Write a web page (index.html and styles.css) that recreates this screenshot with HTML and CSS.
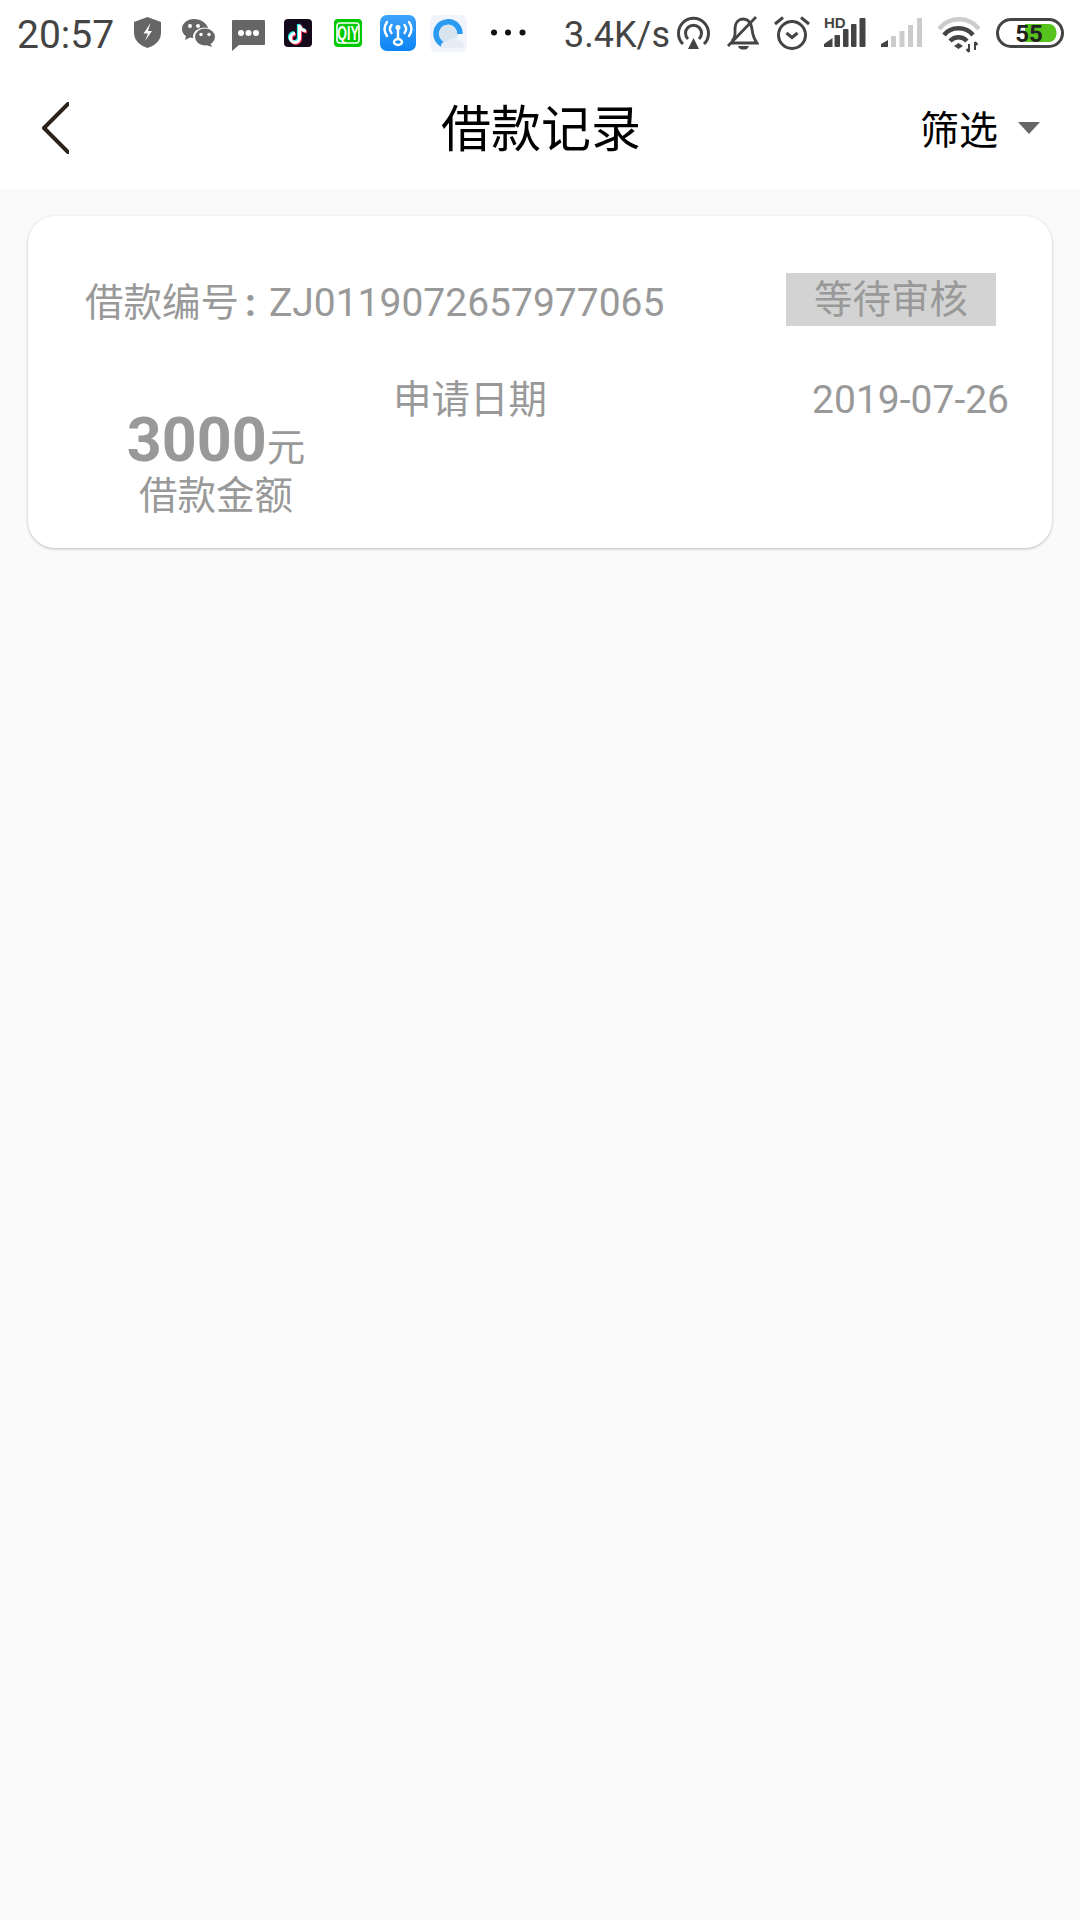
FILE: index.html
```html
<!DOCTYPE html>
<html lang="zh-CN">
<head>
    <meta charset="UTF-8">
    <meta name="viewport" content="width=device-width, initial-scale=1.0">
    <title>借款记录</title>
    <link rel="stylesheet" href="styles.css">
</head>
<body>
    <!-- Status bar: every icon is 70 tall so its y values are screen y values -->
    <div class="status-bar">
        <div class="status-group">
            <span class="clock">20:57</span>
            <svg class="ic-shield" width="27" height="70" viewBox="0 0 27 70">
                <path d="M13.500 17 L27 22 V33 C27 41 20 46 13.500 48 C7 46 0 41 0 33 V22 Z" fill="#666"/>
                <path d="M16.500 23 L9.500 33.500 H14 L11 41 L18 31 H14 Z" fill="#fff"/>
            </svg>
            <svg class="ic-wechat" width="33" height="70" viewBox="0 0 33 70">
                <path d="M12 19 C5 19 0 23.500 0 29 C0 32 1.500 34.500 4 36 L3 40 L8 37.500 C10 38 12 38.200 14 38 L26 28 C24.500 23 19 19 12 19 Z" fill="#666"/>
                <ellipse cx="22.500" cy="37" rx="11.500" ry="9.500" fill="#fff"/>
                <ellipse cx="23" cy="37" rx="10" ry="8.500" fill="#666"/>
                <path d="M28 43 L30 47 L24 45 Z" fill="#666"/>
                <circle cx="8" cy="26" r="2" fill="#fff"/>
                <circle cx="16" cy="26" r="2" fill="#fff"/>
                <circle cx="19" cy="34.500" r="1.700" fill="#fff"/>
                <circle cx="27" cy="34.500" r="1.700" fill="#fff"/>
            </svg>
            <svg class="ic-msg" width="33" height="70" viewBox="0 0 33 70">
                <path d="M1 20 H32 Q33 20 33 21 V44 Q33 45 32 45 H7 L0 51 V21 Q0 20 1 20 Z" fill="#666"/>
                <circle cx="9" cy="33" r="3" fill="#fff"/>
                <circle cx="16.500" cy="33" r="3" fill="#fff"/>
                <circle cx="24" cy="33" r="3" fill="#fff"/>
            </svg>
            <svg class="ic-tiktok" width="28" height="70" viewBox="0 0 28 70">
                <rect y="19" width="28" height="28" rx="4" fill="#15091c"/>
                <g fill="none" stroke-width="3.200">
                    <path d="M14.500 24 V37 A4.500 4.500 0 1 1 10 32.500 M14.500 24 C15 27 17.500 29.500 21 30" stroke="#25f4ee"/>
                    <path d="M16.500 26 V39 A4.500 4.500 0 1 1 12 34.500 M16.500 26 C17 29 19.500 31.500 23 32" stroke="#fe2c55"/>
                    <path d="M15.500 25 V38 A4.500 4.500 0 1 1 11 33.500 M15.500 25 C16 28 18.500 30.500 22 31" stroke="#fff"/>
                </g>
            </svg>
            <svg class="ic-iqiyi" width="28" height="70" viewBox="0 0 28 70">
                <rect y="19" width="28" height="28" rx="4" fill="#00c902"/>
                <rect x="3" y="23" width="22" height="20" rx="3" fill="none" stroke="#fff" stroke-width="1.600"/>
                <text class="iqiyi-text" transform="translate(14 40) scale(0.62 1)" text-anchor="middle">QIY</text>
            </svg>
            <svg class="ic-wifikey" width="36" height="70" viewBox="0 0 36 70">
                <defs>
                    <linearGradient id="keyBlue" x1="0" y1="0" x2="0" y2="1">
                        <stop offset="0" stop-color="#3ea3fb"/>
                        <stop offset="1" stop-color="#0b84f3"/>
                    </linearGradient>
                </defs>
                <rect y="15" width="36" height="36" rx="7" fill="url(#keyBlue)"/>
                <g fill="none" stroke="#fff" stroke-width="2.400" stroke-linecap="round">
                    <path d="M7 22 C3.500 27 3.500 31 7 36"/>
                    <path d="M29 22 C32.500 27 32.500 31 29 36"/>
                    <path d="M11.500 25 C9.500 27.500 9.500 30.500 11.500 33"/>
                    <path d="M24.500 25 C26.500 27.500 26.500 30.500 24.500 33"/>
                    <path d="M18 29 V39"/>
                    <ellipse cx="18" cy="42" rx="4" ry="3"/>
                </g>
                <circle cx="18" cy="27.500" r="2.500" fill="#fff"/>
            </svg>
            <svg class="ic-qq" width="37" height="70" viewBox="0 0 37 70">
                <rect y="15" width="37" height="37" rx="6" fill="#f1f5fb"/>
                <circle cx="18" cy="33" r="10" fill="#d9e4f1"/>
                <path d="M14 45 A12 12 0 1 1 30 34" fill="none" stroke="#2b9bf2" stroke-width="5.500"/>
                <path d="M11 46 C11 42 15 41 17 42 C19 37 28 37 29 41 C34 41 36 48 31 48 H13 C12 48 11 47 11 46 Z" fill="#e6edf6"/>
            </svg>
            <svg class="ic-dots" width="35" height="70" viewBox="0 0 35 70">
                <circle cx="3" cy="32.500" r="3" fill="#111"/>
                <circle cx="17" cy="32.500" r="3" fill="#111"/>
                <circle cx="31.500" cy="32.500" r="3" fill="#111"/>
            </svg>
        </div>
        <div class="status-group">
            <span class="speed">3.4K/s</span>
            <svg class="ic-cast" width="33" height="70" viewBox="0 0 33 70">
                <g fill="none" stroke="#444" stroke-width="3">
                    <path d="M6 44 A15 15 0 1 1 27 44"/>
                    <path d="M11 39 A8 8 0 1 1 22 39"/>
                </g>
                <path d="M16.500 38 L22 49 H11 Z" fill="#444"/>
            </svg>
            <svg class="ic-bell" width="32" height="70" viewBox="0 0 32 70">
                <g fill="none" stroke="#444" stroke-width="2.800">
                    <path d="M5 41 C9 37 8 33 8 29 C8 22 12 19 16 19 C21 19 24 22 25 29 C25.500 34 27 39 30 43 H4"/>
                    <path d="M29 17 L1 46"/>
                </g>
                <path d="M11 46 H22 C21 49 19 49.500 16.500 49.500 C14 49.500 12 49 11 46 Z" fill="#444"/>
            </svg>
            <svg class="ic-alarm" width="36" height="70" viewBox="0 0 36 70">
                <g fill="none" stroke="#444" stroke-width="3">
                    <circle cx="18" cy="35" r="13.500"/>
                    <path d="M12.500 33 L18 37.500 L23.500 33"/>
                    <path d="M1 24 L9 17.500"/>
                    <path d="M27 17.500 L35 24"/>
                </g>
            </svg>
            <svg class="ic-signal" width="42" height="70" viewBox="0 0 42 70">
                <text class="hd-text" x="0" y="28">HD</text>
                <path d="M0 47 V44 L8.500 38 V47 Z" fill="#444"/>
                <rect x="10.500" y="35" width="5.500" height="12" rx="1" fill="#444"/>
                <rect x="19" y="29" width="5.500" height="18" rx="1" fill="#444"/>
                <rect x="27" y="24" width="5.500" height="23" rx="1" fill="#444"/>
                <rect x="35.500" y="18" width="6" height="29" rx="1" fill="#444"/>
            </svg>
            <svg class="ic-signal2" width="41" height="70" viewBox="0 0 41 70">
                <path d="M0 47 V44 L7 40 V47 Z" fill="#444"/>
                <rect x="10" y="36" width="5" height="11" fill="#ccc"/>
                <rect x="18.500" y="31" width="5" height="16" fill="#ccc"/>
                <rect x="27" y="25" width="5" height="22" fill="#ccc"/>
                <rect x="36" y="18" width="5" height="29" fill="#ccc"/>
            </svg>
            <svg class="ic-wifi" width="42" height="70" viewBox="0 0 42 70">
                <g fill="none" stroke-width="4.500">
                    <path d="M1 29 C11 16 31 16 41 29" stroke="#ccc"/>
                    <path d="M6 35 C13 26 28 26 35 35" stroke="#444"/>
                    <path d="M12 41 C17 36 24 36 29 41" stroke="#444"/>
                </g>
                <path d="M16 46 L20.500 43 L25 46 L20.500 49 Z" fill="#444"/>
                <path d="M31 52 V44 M28.500 49 L31 52 M37 42 V50 M37 42 L39.500 45" fill="none" stroke="#444" stroke-width="2"/>
            </svg>
            <svg class="ic-battery" width="68" height="70" viewBox="0 0 68 70">
                <rect x="1.500" y="19.500" width="65" height="27" rx="13.500" fill="none" stroke="#444" stroke-width="3"/>
                <path d="M29 24 H53 C63 24 63 42 53 42 H29 Z" fill="#56c31c"/>
                <text class="battery-text" x="33" y="42" text-anchor="middle">55</text>
            </svg>
        </div>
    </div>

    <header class="nav">
        <svg class="back" width="28" height="54" viewBox="0 0 28 54">
            <path d="M27 2 L3 26 L27 50" fill="none" stroke="#2a241c" stroke-width="4" stroke-linecap="round" stroke-linejoin="round"/>
        </svg>
        <h1 class="nav-title">借款记录</h1>
        <div class="filter">
            <span>筛选</span>
            <span class="filter-arrow"></span>
        </div>
    </header>

    <main class="list">
        <div class="loan-card">
            <div class="card-top">
                <span class="loan-no">借款编号<b class="loan-colon">:</b><span class="latin">ZJ0119072657977065</span></span>
                <span class="loan-status">等待审核</span>
            </div>
            <div class="card-bottom">
                <div class="amount-box">
                    <div class="amount"><b>3000</b>元</div>
                    <div class="amount-label">借款金额</div>
                </div>
                <span class="date-label">申请日期</span>
                <span class="date-value latin">2019-07-26</span>
            </div>
        </div>
    </main>
</body>
</html>
```

FILE: styles.css
```css
/* Basic reset */
* {
    margin: 0;
    padding: 0;
    box-sizing: border-box;
}

body {
    width: 1080px;
    min-height: 1920px;
    font-family: Roboto, "Noto Sans CJK SC", sans-serif;
    background-color: #fafafa;
    color: #999;
}

svg {
    display: block;
    flex-shrink: 0;
}

/* Status bar */
.status-bar {
    height: 70px;
    padding: 0 16px 0 17px;
    display: flex;
    justify-content: space-between;
    background-color: #fff;
    color: #444;
}

.status-group {
    display: flex;
    align-items: center;
}

.clock {
    width: 117px;
    font-size: 39px;
}

.ic-wechat { margin-left: 21px; }
.ic-msg { margin-left: 17px; }
.ic-tiktok { margin-left: 19px; }
.ic-iqiyi { margin-left: 22px; }
.ic-wifikey { margin-left: 18px; }
.ic-qq { margin-left: 14px; }
.ic-dots { margin-left: 24px; }

.speed {
    width: 113px;
    font-size: 36px;
}

.ic-bell { margin-left: 17px; }
.ic-alarm { margin-left: 15px; }
.ic-signal { margin-left: 14px; }
.ic-signal2 { margin-left: 15px; }
.ic-wifi { margin-left: 16px; }
.ic-battery { margin-left: 16px; }

.iqiyi-text {
    font-family: "Liberation Sans", sans-serif;
    font-size: 20px;
    font-weight: bold;
    fill: #fff;
}

.hd-text {
    font-family: "Liberation Sans", sans-serif;
    font-size: 15px;
    font-weight: bold;
    fill: #444;
}

.battery-text {
    font-family: Roboto, sans-serif;
    font-size: 24px;
    font-weight: bold;
    fill: #222;
}

/* Title bar */
.nav {
    height: 119px;
    padding: 0 40px 0 41px;
    display: flex;
    align-items: center;
    background-color: #fff;
    color: #000;
}

.back {
    margin-bottom: 2px;
}

.nav-title {
    margin-left: 372px;
    font-size: 50px;
    font-weight: 400;
    line-height: 70px;
}

.filter {
    margin-left: auto;
    margin-bottom: 6px;
    display: flex;
    align-items: center;
    font-size: 39px;
}

.filter-arrow {
    margin-top: 2px;
    margin-left: 20px;
    border-top: 12px solid #666;
    border-left: 11px solid transparent;
    border-right: 11px solid transparent;
}

/* Record list */
.list {
    padding: 27px 28px;
}

.loan-card {
    height: 332px;
    padding-top: 57px;
    background-color: #fff;
    border-radius: 27px;
    box-shadow: 0 1px 3px rgba(0, 0, 0, 0.25);
    font-size: 38.5px;
}

.latin {
    font-size: 39px;
}

.card-top {
    height: 53px;
    padding: 0 56px 0 57px;
    display: flex;
    align-items: center;
    justify-content: space-between;
}

.loan-no {
    margin-bottom: 2px;
}

.loan-colon {
    margin: 0 13px 0 6px;
}

.loan-status {
    width: 210px;
    height: 53px;
    line-height: 53px;
    text-align: center;
    background-color: #d3d3d3;
}

.card-bottom {
    margin-top: 51px;
    padding: 0 43px 0 58px;
    display: flex;
    align-items: flex-start;
}

.amount-box {
    width: 260px;
    margin-top: 38px;
    text-align: center;
}

.amount {
    line-height: 50px;
}

.amount b {
    font-size: 61px;
}

.amount-label {
    line-height: 46px;
}

.date-label,
.date-value {
    line-height: 46px;
}

.date-label {
    margin-left: 47px;
}

.date-value {
    margin-left: auto;
}
```
